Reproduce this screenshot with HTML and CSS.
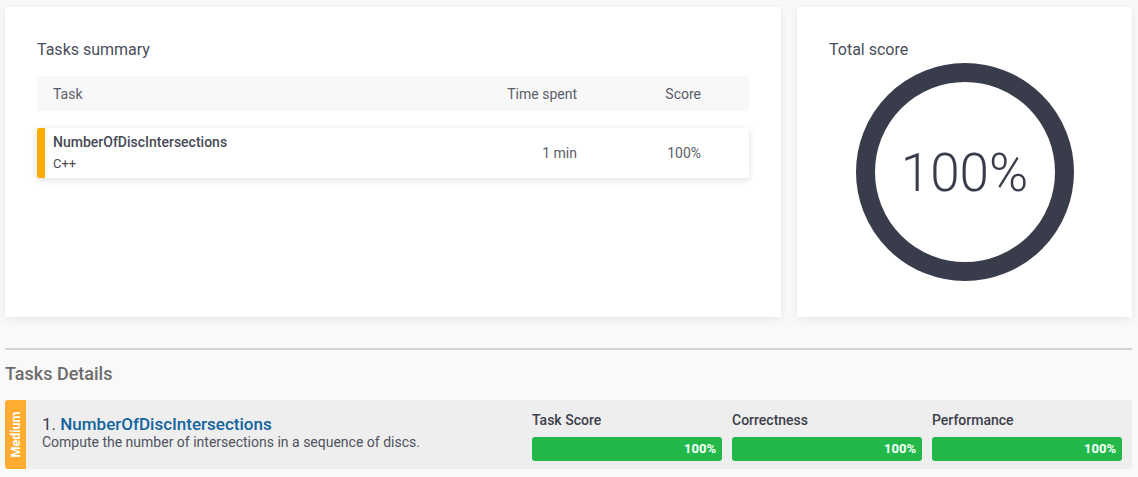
FILE: index.html
```html
<!DOCTYPE html>
<html>
<head>
<meta charset="utf-8">
<link rel="stylesheet" href="styles.css">
</head>
<body>
<div class="top">
  <section class="card summary">
    <h2 class="card-title">Tasks summary</h2>
    <div class="thead">
      <span class="c-task">Task</span>
      <span class="c-time">Time spent</span>
      <span class="c-score">Score</span>
    </div>
    <div class="trow">
      <div class="c-task">
        <div class="tname">NumberOfDiscIntersections</div>
        <div class="tlang">C++</div>
      </div>
      <span class="c-time">1 min</span>
      <span class="c-score">100%</span>
    </div>
  </section>
  <section class="card total">
    <h2 class="card-title">Total score</h2>
    <div class="ring">
      <svg width="220" height="220" viewBox="0 0 220 220">
        <circle cx="110" cy="110" r="99.5" fill="none" stroke="#393c4b" stroke-width="19"/>
      </svg>
      <span class="ring-text">100%</span>
    </div>
  </section>
</div>
<hr class="sep">
<h3 class="details-title">Tasks Details</h3>
<div class="detail">
  <div class="badge"><span>Medium</span></div>
  <div class="dinfo">
    <div class="dtitle"><span class="num">1.</span> <a class="dname">NumberOfDiscIntersections</a></div>
    <div class="ddesc">Compute the number of intersections in a sequence of discs.</div>
  </div>
  <div class="metric">
    <div class="mlabel">Task Score</div>
    <div class="bar">100%</div>
  </div>
  <div class="metric">
    <div class="mlabel">Correctness</div>
    <div class="bar">100%</div>
  </div>
  <div class="metric">
    <div class="mlabel">Performance</div>
    <div class="bar">100%</div>
  </div>
</div>
</body>
</html>
```
FILE: styles.css
```css
* { box-sizing: border-box; }
html, body { margin: 0; }
body {
  background: #f9f9f9;
  font-family: Roboto, "Liberation Sans", sans-serif;
  color: #474a56;
  padding: 7px 6px 0 5px;
  width: 1138px;
}
.top {
  display: flex;
  gap: 16px;
}
.card {
  background: #fff;
  box-shadow: 0 2px 8px rgba(0,0,0,0.08);
  height: 310px;
  padding: 33px 32px;
}
.summary { width: 776px; }
.total { width: 335px; }
.card-title {
  margin: 0;
  font-size: 16px;
  font-weight: 400;
  line-height: 19px;
  color: #4a4d5a;
}
.thead, .trow {
  display: grid;
  grid-template-columns: 1fr 140px 124px;
  padding: 0 48px 0 16px;
  align-items: center;
  font-size: 14px;
}
.thead {
  margin-top: 17px;
  height: 35px;
  background: #f8f8f8;
  color: #5a5d68;
}
.trow {
  margin-top: 17px;
  height: 50px;
  background: #fff;
  box-shadow: 0 2px 7px rgba(0,0,0,0.13);
  border-left: 8px solid #ffab00;
  border-radius: 2px;
  padding-left: 8px;
  color: #5a5d68;
}
.c-time, .c-score { text-align: right; }
.tname {
  font-size: 14px;
  font-weight: 500;
  color: #474a56;
  line-height: 16px;
  margin-top: -2px;
}
.tlang {
  font-size: 13px;
  line-height: 15px;
  margin-top: 6px;
  color: #474a56;
}
.total { display: flex; flex-direction: column; }
.ring {
  position: relative;
  width: 220px;
  height: 220px;
  margin: 3px auto 0;
}
.ring svg { display: block; }
.ring-text {
  position: absolute;
  left: 0; right: 0; top: 0; bottom: 0;
  display: flex;
  align-items: center;
  justify-content: center;
  font-size: 53px;
  font-weight: 300;
  color: #393c4b;
  padding-top: 2px;
}
.sep {
  margin: 31px 0 0;
  border: 0;
  border-top: 2px solid #d2d2d2;
  width: 1127px;
}
.details-title {
  margin: 13px 0 0;
  font-size: 18px;
  font-weight: 500;
  line-height: 21px;
  color: #6c6c6c;
}
.detail {
  margin-top: 16px;
  width: 1127px;
  height: 69px;
  background: #eeeeee;
  border-radius: 3px;
  display: flex;
  align-items: stretch;
  gap: 10px;
  padding-right: 10px;
}
.badge {
  width: 21px;
  background: #ffac30;
  border-radius: 3px 0 0 3px;
  display: flex;
  align-items: center;
  justify-content: center;
}
.badge span {
  transform: rotate(-90deg);
  color: #fff;
  font-size: 12.5px;
  font-weight: 700;
  white-space: nowrap;
}
.dinfo {
  flex: 1;
  padding: 14px 0 0 6px;
}
.dtitle {
  font-size: 17px;
  line-height: 20px;
  color: #3c3f4c;
}
.dname { color: #14649e; font-weight: 500; }
.ddesc {
  font-size: 14px;
  line-height: 16px;
  color: #4f5260;
}
.metric {
  width: 190px;
  padding-top: 12px;
}
.mlabel {
  font-size: 14px;
  font-weight: 500;
  line-height: 16px;
  color: #3d404b;
}
.bar {
  margin-top: 9px;
  height: 24px;
  background: #22b94a;
  border-radius: 3px;
  color: #fff;
  font-size: 13px;
  font-weight: 700;
  text-align: right;
  line-height: 24px;
  padding-right: 6px;
}
```
